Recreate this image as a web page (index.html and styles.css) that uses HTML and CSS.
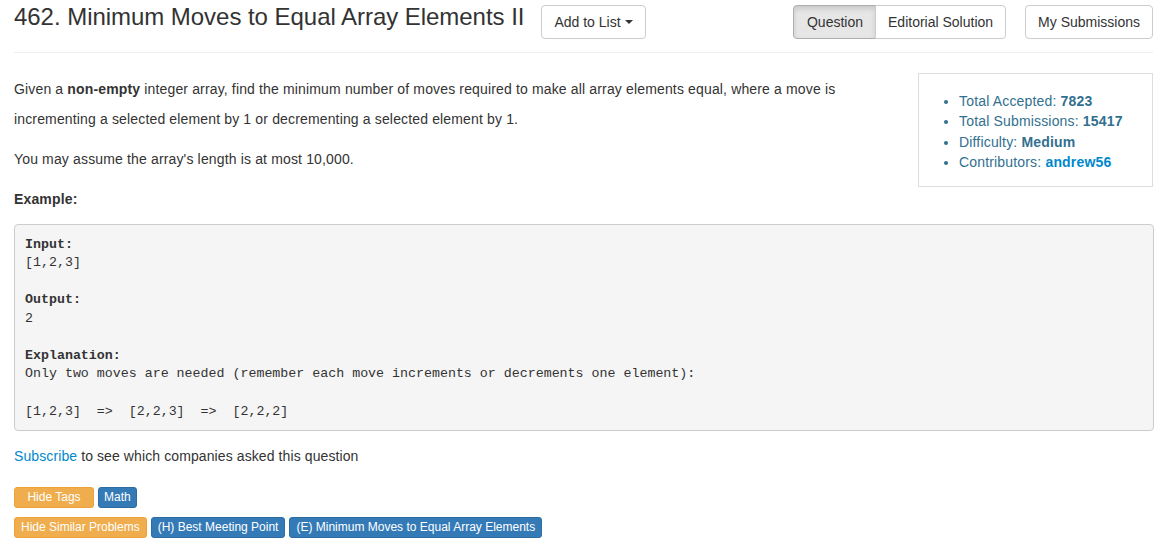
FILE: index.html
```html
<!DOCTYPE html>
<html>
<head>
<meta charset="utf-8">
<link rel="stylesheet" href="styles.css">
</head>
<body>
<div class="page">
  <div class="header">
    <div class="header-left">
      <h3 class="title">462. Minimum Moves to Equal Array Elements II</h3>
      <button class="btn">Add to List <span class="caret"></span></button>
    </div>
    <div class="header-right">
      <div class="btn-group">
        <button class="btn active">Question</button><button class="btn">Editorial Solution</button>
      </div>
      <button class="btn">My Submissions</button>
    </div>
  </div>
  <div class="content">
    <div class="main">
      <p>Given a <b>non-empty</b> integer array, find the minimum number of moves required to make all array elements equal, where a move is incrementing a selected element by 1 or decrementing a selected element by 1.</p>
      <p>You may assume the array's length is at most 10,000.</p>
      <p><b>Example:</b></p>
    </div>
    <div class="side">
      <ul>
        <li>Total Accepted: <b>7823</b></li>
        <li>Total Submissions: <b>15417</b></li>
        <li>Difficulty: <b>Medium</b></li>
        <li>Contributors: <a class="contrib" href="#">andrew56</a></li>
      </ul>
    </div>
  </div>
<pre class="example"><b>Input:</b>
[1,2,3]

<b>Output:</b>
2

<b>Explanation:</b>
Only two moves are needed (remember each move increments or decrements one element):

[1,2,3]  =>  [2,2,3]  =>  [2,2,2]</pre>
  <p class="subscribe"><a href="#">Subscribe</a> to see which companies asked this question</p>
  <div class="tags">
    <div class="tag-row">
      <span class="tag warn wide">Hide Tags</span>
      <span class="tag primary narrow">Math</span>
    </div>
    <div class="tag-row">
      <span class="tag warn">Hide Similar Problems</span>
      <span class="tag primary">(H) Best Meeting Point</span>
      <span class="tag primary">(E) Minimum Moves to Equal Array Elements</span>
    </div>
  </div>
</div>
</body>
</html>
```

FILE: styles.css
```css
html, body {
  margin: 0;
  padding: 0;
  background: #fff;
}
body {
  font-family: "Liberation Sans", Arial, Helvetica, sans-serif;
  font-size: 14px;
  color: #333;
}
.page {
  width: 1139px;
  padding: 5px 0 0 14px;
}
.header {
  display: flex;
  justify-content: space-between;
  align-items: center;
  padding-bottom: 13px;
  border-bottom: 1px solid #eee;
}
.header-left {
  display: flex;
  align-items: center;
  gap: 17px;
}
.header-right {
  display: flex;
  align-items: center;
  gap: 19px;
}
.title {
  margin: 0;
  font-size: 24px;
  font-weight: 400;
  line-height: 28px;
  color: #333;
  position: relative;
  top: -5px;
  letter-spacing: -0.04px;
}
.btn {
  font-family: "Liberation Sans", Arial, Helvetica, sans-serif;
  font-size: 14px;
  line-height: 20px;
  padding: 6px 12px;
  border: 1px solid #ccc;
  border-radius: 4px;
  background: #fff;
  color: #333;
  height: 34px;
  display: inline-flex;
  align-items: center;
  gap: 4px;
}
.caret {
  display: inline-block;
  width: 0;
  height: 0;
  border-top: 4px solid #333;
  border-left: 4px solid transparent;
  border-right: 4px solid transparent;
}
.btn-group {
  display: flex;
}
.btn-group .btn:first-child {
  border-top-right-radius: 0;
  border-bottom-right-radius: 0;
  padding-left: 13px;
}
.btn-group .btn:last-child {
  border-top-left-radius: 0;
  border-bottom-left-radius: 0;
  margin-left: -1px;
}
.btn.active {
  background: #e6e6e6;
  border-color: #adadad;
  box-shadow: inset 0 3px 5px rgba(0,0,0,0.125);
}
.content {
  display: flex;
  align-items: flex-start;
  margin-top: 21px;
}
.main {
  width: 880px;
  letter-spacing: 0.15px;
}
.main p {
  margin: 0 0 10px;
  line-height: 30px;
}
.side {
  margin-left: 24px;
  width: 233px;
  border: 1px solid #ddd;
  padding: 17px 0 14px 0;
  margin-top: -1px;
  color: #31708f;
  letter-spacing: 0.17px;
}
.side ul {
  margin: 0;
  padding-left: 40px;
  line-height: 20.3px;
}
.side a.contrib {
  color: #0088cc;
  font-weight: bold;
  text-decoration: none;
}
.example {
  margin: 0 0 10px;
  padding: 10.5px 10px 8.5px;
  background: #f5f5f5;
  border: 1px solid #ccc;
  border-radius: 4px;
  font-family: "Liberation Mono", "Courier New", monospace;
  font-size: 13.3px;
  line-height: 18.57px;
  color: #333;
  width: 1118px;
}
.subscribe {
  margin: 0;
  line-height: 30px;
  letter-spacing: 0.1px;
}
.subscribe a {
  color: #0088cc;
  text-decoration: none;
}
.tags {
  margin-top: 16px;
}
.tag-row {
  display: flex;
  gap: 4px;
  margin-bottom: 9px;
}
.tag {
  display: inline-block;
  font-size: 12px;
  line-height: 19px;
  padding: 0 6px;
  border-radius: 3px;
  color: #fff;
  border: 1px solid transparent;
}
.tag.warn {
  background: #f0ad4e;
  border-color: #eea236;
}
.tag.primary {
  background: #337ab7;
  border-color: #2e6da4;
}
.tag.wide {
  width: 66px;
  text-align: center;
}
.tag.narrow {
  padding: 0 5px;
}
```
